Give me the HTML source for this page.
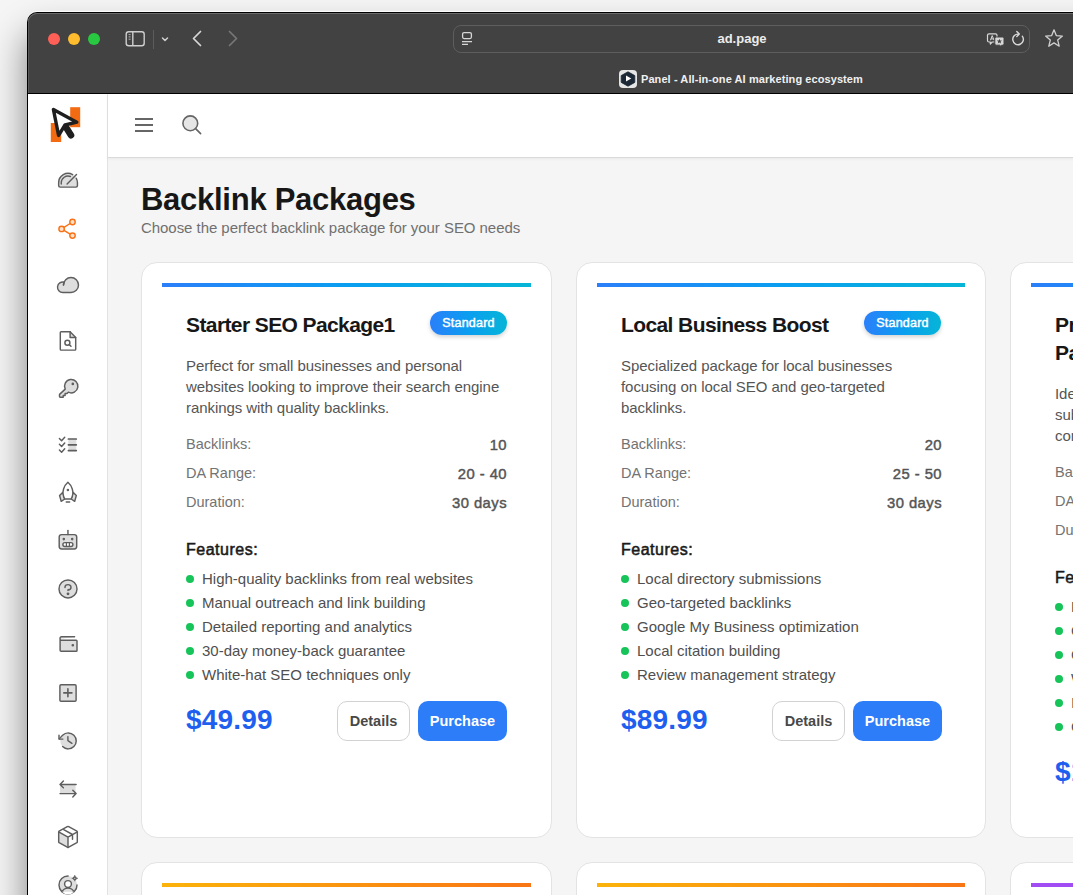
<!DOCTYPE html>
<html><head><meta charset="utf-8">
<style>
*{box-sizing:border-box;margin:0;padding:0}
html,body{width:1073px;height:895px;overflow:hidden}
body{position:relative;font-family:"Liberation Sans",sans-serif;background:#f5f5f5;}
.abs{position:absolute}
#win{position:absolute;left:27px;top:12px;width:1100px;height:900px;border-radius:10px 0 0 0;background:#000;overflow:hidden;box-shadow:0 -1px 0 0 rgba(255,255,255,.8),0 22px 36px rgba(0,0,0,.48)}
#toolbar{position:absolute;left:1px;top:1px;right:0;height:80px;background:#424242;border-radius:9px 0 0 0;box-shadow:inset 0 1px 0 #6a6a6a,inset 1px 0 0 #5a5a5a}
#sidebar{position:absolute;left:1px;top:82px;width:80px;height:820px;background:#fff;border-right:1px solid #e2e2e2}
#header{position:absolute;left:81px;top:82px;width:1020px;height:64px;background:#fff;border-bottom:1px solid #dadada;box-shadow:0 1px 3px rgba(0,0,0,0.05);z-index:2}
#main{position:absolute;left:81px;top:146px;width:1020px;height:760px;background:#f5f5f5}
.card{position:absolute;top:104px;width:411px;height:576px;background:#fff;border:1px solid #e3e3e3;border-radius:16px}

.t{position:absolute;white-space:nowrap}
.bar{position:absolute;left:20px;top:20px;right:20px;height:4px}
.ctitle{position:absolute;left:44px;top:48px;font-size:21px;letter-spacing:-0.6px;font-weight:bold;color:#171717;line-height:28px;white-space:nowrap}
.badge{position:absolute;right:44px;top:48px;width:77px;height:24px;border-radius:12px;background:linear-gradient(90deg,#2b7ff9,#0a9ef0 50%,#06b5d7);color:#fff;font-size:12.5px;font-weight:normal;-webkit-text-stroke:0.45px #fff;letter-spacing:0.2px;line-height:24px;text-align:center;box-shadow:0 2px 4px rgba(0,0,0,0.18)}
.desc{position:absolute;left:44px;top:92px;width:330px;font-size:15px;letter-spacing:-0.06px;line-height:21px;color:#555}
.stat{position:absolute;left:44px;width:321px;height:29px;font-size:14.5px;line-height:29px;color:#737373}
.stat b{position:absolute;right:0;top:1px;color:#555;font-weight:normal;-webkit-text-stroke:0.45px #555;letter-spacing:0.45px;font-size:14.8px}
.feath{position:absolute;left:44px;font-size:16px;font-weight:normal;-webkit-text-stroke:0.55px #1a1a1a;letter-spacing:0.5px;line-height:24px;color:#1a1a1a}
.feat{position:absolute;left:60px;font-size:15px;line-height:24px;color:#4f4f4f;white-space:nowrap}
.dot{position:absolute;left:44px;width:8px;height:8px;border-radius:50%;background:#16c45a}
.price{position:absolute;left:44px;font-size:28px;letter-spacing:0.2px;font-weight:bold;line-height:40px;color:#1f5fef}
.btn1{position:absolute;left:195px;width:73px;height:40px;border:1px solid #d2d2d2;border-radius:10px;font-size:14.5px;font-weight:bold;color:#484848;line-height:38px;text-align:center}
.btn2{position:absolute;left:276px;width:89px;height:40px;border-radius:10px;background:#2e7df8;font-size:14.5px;font-weight:bold;color:#fff;line-height:40px;text-align:center}
</style></head>
<body>
<div id="win">
  <div id="toolbar">
    <div class="abs" style="left:20px;top:20px;width:12px;height:12px;border-radius:50%;background:#fe5f57"></div>
    <div class="abs" style="left:40px;top:20px;width:12px;height:12px;border-radius:50%;background:#febc2e"></div>
    <div class="abs" style="left:60px;top:20px;width:12px;height:12px;border-radius:50%;background:#28c840"></div>
    <svg class="abs" style="left:93px;top:12.5px" width="24" height="24" viewBox="0 0 24 24" fill="none" stroke="#cfcfcf" stroke-width="1.4">
      <rect x="5.2" y="5.7" width="18" height="14" rx="2.5"/><line x1="11.8" y1="5.7" x2="11.8" y2="19.7"/>
      <line x1="7.6" y1="8.6" x2="9.6" y2="8.6" stroke-width="0.8"/><line x1="7.6" y1="10.9" x2="9.6" y2="10.9" stroke-width="0.8"/><line x1="7.6" y1="13.2" x2="9.6" y2="13.2" stroke-width="0.8"/>
    </svg>
    <div class="abs" style="left:125px;top:17px;width:1px;height:19px;background:#5c5c5c"></div>
    <svg class="abs" style="left:130px;top:20px" width="14" height="12" viewBox="0 0 14 12" fill="none" stroke="#d0d0d0" stroke-width="1.5" stroke-linecap="round" stroke-linejoin="round"><path d="M4.5,5 L7,7.5 L9.5,5"/></svg>
    <svg class="abs" style="left:159px;top:14px" width="20" height="22" viewBox="0 0 20 22" fill="none" stroke="#d8d8d8" stroke-width="1.7" stroke-linecap="round" stroke-linejoin="round"><path d="M13.5,4.5 L6.5,11.5 L13.5,18.5"/></svg>
    <svg class="abs" style="left:195px;top:14px" width="20" height="22" viewBox="0 0 20 22" fill="none" stroke="#777" stroke-width="1.7" stroke-linecap="round" stroke-linejoin="round"><path d="M6.5,4.5 L13.5,11.5 L6.5,18.5"/></svg>
    <div class="abs" style="left:425px;top:12px;width:577px;height:28px;border:1px solid #5e5e5e;border-radius:8px"></div>
    <svg class="abs" style="left:432px;top:18px" width="14" height="16" viewBox="0 0 14 16" fill="none" stroke="#d6d6d6" stroke-width="1.3"><rect x="2.6" y="1.6" width="8.8" height="6" rx="1.5"/><line x1="2" y1="10.6" x2="12" y2="10.6"/><line x1="2" y1="13.4" x2="8" y2="13.4"/></svg>
    <div class="abs" style="left:425px;top:12px;width:578px;height:28px;line-height:28px;text-align:center;color:#ececec;font-size:13px;font-weight:bold">ad.page</div>
    <div class="abs" style="left:591px;top:57px;width:18px;height:18px;border-radius:4px;background:#e6e6e6"></div>
    <svg class="abs" style="left:591px;top:57px" width="18" height="18" viewBox="0 0 18 18"><path d="M9,1.8 L15.8,5.6 V12.4 L9,16.2 L2.2,12.4 V5.6 Z" fill="#1c2836" stroke="#1c2836" stroke-width="0.8" stroke-linejoin="round"/><path d="M7,5.6 L12.3,8.6 L7,11.6 Z" fill="#fff"/></svg>
    <svg class="abs" style="left:958px;top:19px" width="20" height="16" viewBox="0 0 20 16" fill="none" stroke="#d8d8d8" stroke-width="1.2" stroke-linejoin="round">
      <path d="M3,1.8 H9.5 Q11,1.8 11,3.3 V8.5 Q11,10 9.5,10 H6.2 L4.3,12 V10 H3 Q1.5,10 1.5,8.5 V3.3 Q1.5,1.8 3,1.8 Z"/>
      <path d="M4.4,8.3 L6.2,3.6 L8,8.3 M5,6.9 H7.4" stroke-width="1"/>
      <path d="M10.3,5 H16.5 Q18,5 18,6.5 V11.7 Q18,13.2 16.5,13.2 H15.6 V15 L13.7,13.2 H10.3 Q8.8,13.2 8.8,11.7 V6.5 Q8.8,5 10.3,5 Z" fill="#d8d8d8" stroke="#424242" stroke-width="1"/>
      <path d="M13.4,6.8 L14.1,8.6 L16,8.6 L14.5,9.7 L15.1,11.5 L13.4,10.4 L11.7,11.5 L12.3,9.7 L10.8,8.6 L12.7,8.6 Z" fill="#424242" stroke="none"/>
    </svg>
    <svg class="abs" style="left:982px;top:17px" width="16" height="17" viewBox="0 0 16 17" fill="none" stroke="#d8d8d8" stroke-width="1.4" stroke-linecap="round" stroke-linejoin="round"><path d="M12.3,6.2 A5.3,5.3 0 1 1 8.5,4.1"/><path d="M6.8,1.6 L9.3,4.1 L6.8,6.5"/></svg>
    <svg class="abs" style="left:1015.5px;top:15px" width="20" height="21" viewBox="0 0 20 21" fill="none" stroke="#d0d0d0" stroke-width="1.3" stroke-linejoin="round"><path d="M10,1.8 L12.3,7.6 L18.4,8.1 L13.7,12.1 L15.2,18.2 L10,14.9 L4.8,18.2 L6.3,12.1 L1.6,8.1 L7.7,7.6 Z"/></svg>
    <div class="abs" id="tabtitle" style="left:613px;top:58px;height:16px;line-height:16px;color:#f0f0f0;font-size:11px;letter-spacing:0.08px;font-weight:bold;white-space:nowrap">Panel - All-in-one AI marketing ecosystem</div>
  </div>
  <div id="sidebar">
    <svg class="abs" style="left:20px;top:10px" width="40" height="40" viewBox="0 0 40 40">
      <rect x="22.2" y="3.2" width="10" height="20" fill="#f26b12"/><rect x="2.8" y="19" width="10.4" height="19" fill="#f26b12"/>
      <path d="M17.2,22 L23,31.2" stroke="#1f1f1f" stroke-width="6.6" stroke-linecap="round"/>
      <path d="M5.4,5.4 L28.8,18.2 L17,21 L10.6,31.4 Z" fill="#fff" stroke="#1f1f1f" stroke-width="3.4" stroke-linejoin="round"/>
    </svg>
<svg class="abs" style="left:28px;top:74px" width="24" height="24" viewBox="0 0 24 24" fill="none" stroke="#5e5e5e" stroke-width="1.45" stroke-linecap="round" stroke-linejoin="round"><path d="M2.65,14.85 A9.4,9.4 0 0 1 21.45,14.85 V17.6 Q21.45,19.1 19.95,19.1 H4.15 Q2.65,19.1 2.65,17.6 Z" fill="#dedede" stroke="none"/><path d="M20.24,10.24 A9.4,9.4 0 0 1 21.45,14.85 V17.6 Q21.45,19.1 19.95,19.1 H4.15 Q2.65,19.1 2.65,17.6 V14.85 A9.4,9.4 0 0 1 16.65,6.65"/><path d="M5.25,16.1 V14.85 A6.8,6.8 0 0 1 14.44,8.49"/><path d="M11.1,16.1 L20.5,6.6"/></svg>
<svg class="abs" style="left:28px;top:123px" width="24" height="24" viewBox="0 0 24 24" fill="none" stroke="#f97316" stroke-width="1.45" stroke-linecap="round" stroke-linejoin="round"><line x1="5.6" y1="11.9" x2="16.5" y2="5"/><line x1="5.6" y1="11.9" x2="16.5" y2="18.6"/><circle cx="16.5" cy="5" r="2.7" fill="#fde3cf"/><circle cx="5.6" cy="11.9" r="2.7" fill="#fde3cf"/><circle cx="16.5" cy="18.6" r="2.7" fill="#fde3cf"/></svg>
<svg class="abs" style="left:28px;top:179px" width="24" height="24" viewBox="0 0 24 24" fill="none" stroke="#5e5e5e" stroke-width="1.45" stroke-linecap="round" stroke-linejoin="round"><path d="M7.5,12 A7.5,7.5 0 1 1 15,19.5 H6.75 A5.25,5.25 0 1 1 8.06,9.16" fill="#dedede"/><path d="M7.5,12 A7.5,7.5 0 0 1 8.1,9.1"/></svg>
<svg class="abs" style="left:28px;top:235px" width="24" height="24" viewBox="0 0 24 24" fill="none" stroke="#5e5e5e" stroke-width="1.45" stroke-linecap="round" stroke-linejoin="round"><path d="M14.1,2.8 V8.4 H19.7 Z" fill="#dedede" stroke="none"/><path d="M18.9,21.1 H5.1 A0.8,0.8 0 0 1 4.3,20.3 V3.6 A0.8,0.8 0 0 1 5.1,2.8 H14.1 L19.7,8.4 V20.3 A0.8,0.8 0 0 1 18.9,21.1 Z"/><path d="M14.1,2.8 V8.4 H19.7"/><circle cx="11.4" cy="13.8" r="2.5"/><path d="M13.2,15.6 L15,17.3"/></svg>
<svg class="abs" style="left:28px;top:283px" width="24" height="24" viewBox="0 0 24 24" fill="none" stroke="#5e5e5e" stroke-width="1.45" stroke-linecap="round" stroke-linejoin="round"><path d="M9.2,12.1 A6.7,6.7 0 1 1 12.3,15.2 L11,16.5 H9.1 V18.4 H7.2 V20.3 H4.2 Q3.5,20.3 3.5,19.6 V17.7 Q3.5,17.4 3.8,17.1 Z" fill="#dedede"/><circle cx="16.8" cy="6.9" r="0.6" fill="#5e5e5e"/></svg>
<svg class="abs" style="left:28px;top:339px" width="24" height="24" viewBox="0 0 24 24" fill="none" stroke="#5e5e5e" stroke-width="1.45" stroke-linecap="round" stroke-linejoin="round"><rect x="12.4" y="6" width="7.9" height="11.6" fill="#dedede" stroke="none"/><path d="M12.4,6 H20.3 M12.4,11.8 H20.3 M12.4,17.6 H20.3" stroke-width="1.7"/><path d="M3.4,5.5 L5.6,7.7 L8.7,4.2 M3.4,11.3 L5.6,13.5 L8.7,10 M3.4,17.1 L5.6,19.3 L8.7,15.8"/></svg>
<svg class="abs" style="left:28px;top:386px" width="24" height="24" viewBox="0 0 24 24" fill="none" stroke="#5e5e5e" stroke-width="1.45" stroke-linecap="round" stroke-linejoin="round"><path d="M6.9,12.3 L3.6,15.6 L5.2,21.3 L8.7,19 Z M17,12.3 L20.3,15.6 L18.7,21.3 L15.2,19 Z" fill="#dedede"/><path d="M8.7,19 C4.8,12 8.5,5 11.9,2.2 C15.3,5 19.1,12 15.2,19 Z" fill="#fff"/><circle cx="11.9" cy="10" r="0.55" fill="#5e5e5e"/><path d="M10.2,22 H13.7" stroke-width="1.3"/></svg>
<svg class="abs" style="left:28px;top:434px" width="24" height="24" viewBox="0 0 24 24" fill="none" stroke="#5e5e5e" stroke-width="1.45" stroke-linecap="round" stroke-linejoin="round"><rect x="3.2" y="6.6" width="17.5" height="14.3" rx="2.4" fill="#dedede"/><path d="M11.95,6.6 V2.4"/><circle cx="7.8" cy="11.1" r="0.55" fill="#5e5e5e"/><circle cx="16.2" cy="11.1" r="0.55" fill="#5e5e5e"/><rect x="6.9" y="14.6" width="10" height="3.9" rx="1.95" fill="#fff"/><path d="M10.4,14.6 V18.5 M13.4,14.6 V18.5" stroke-width="1.2"/></svg>
<svg class="abs" style="left:28px;top:483px" width="24" height="24" viewBox="0 0 24 24" fill="none" stroke="#5e5e5e" stroke-width="1.45" stroke-linecap="round" stroke-linejoin="round"><circle cx="12" cy="11.9" r="9" fill="#dedede"/><path d="M12,13.5 V12.75 C13.66,12.75 15,11.57 15,10.125 S13.66,7.6 12,7.6 9,8.68 9,10.125 V10.5"/><circle cx="12" cy="16.8" r="0.7" fill="#5e5e5e"/></svg>
<svg class="abs" style="left:28px;top:538px" width="24" height="24" viewBox="0 0 24 24" fill="none" stroke="#5e5e5e" stroke-width="1.45" stroke-linecap="round" stroke-linejoin="round"><path d="M4.1,7 V18.2 A1,1 0 0 0 5.1,19.2 H20.2 A0.8,0.8 0 0 0 21,18.4 V9.1 A0.8,0.8 0 0 0 20.2,8.3 H5.5 A1.4,1.4 0 0 1 4.1,6.9 A1.6,1.6 0 0 1 5.7,4.7 H18.6" fill="#dedede"/><circle cx="16.8" cy="13.2" r="0.6" fill="#5e5e5e"/></svg>
<svg class="abs" style="left:28px;top:587px" width="24" height="24" viewBox="0 0 24 24" fill="none" stroke="#5e5e5e" stroke-width="1.45" stroke-linecap="round" stroke-linejoin="round"><rect x="3.9" y="3.8" width="16.2" height="16.5" rx="1.1" fill="#dedede"/><path d="M7.8,11.9 H15.9 M11.9,7.7 V15.8" stroke-width="1.6"/></svg>
<svg class="abs" style="left:28px;top:635px" width="24" height="24" viewBox="0 0 24 24" fill="none" stroke="#5e5e5e" stroke-width="1.45" stroke-linecap="round" stroke-linejoin="round"><circle cx="12.3" cy="11.9" r="8" fill="#dedede" stroke="none"/><path d="M6.6,17.6 A8,8 0 1 0 6.6,6.2 C5.5,7.3 4.4,8.5 3.3,9.9"/><path d="M6.9,10.1 H3 V6.2"/><path d="M11.9,7.6 V11.6 L15.9,14.3"/></svg>
<svg class="abs" style="left:28px;top:683px" width="24" height="24" viewBox="0 0 24 24" fill="none" stroke="#5e5e5e" stroke-width="1.45" stroke-linecap="round" stroke-linejoin="round"><rect x="4" y="7.4" width="15.6" height="9.2" fill="#dedede" stroke="none"/><path d="M7.4,4 L4,7.4 L7.4,10.7 M4,7.4 H20.1 M16.8,13.2 L20.1,16.6 L16.8,20 M20.1,16.6 H4"/></svg>
<svg class="abs" style="left:28px;top:731px" width="24" height="24" viewBox="0 0 24 24" fill="none" stroke="#5e5e5e" stroke-width="1.45" stroke-linecap="round" stroke-linejoin="round"><path d="M12,12.1 V22.3 L3.1,17.3 Q2.7,17 2.7,16.6 V7.3 Z" fill="#dedede" stroke="none"/><path d="M20.9,6.2 L12.7,1.7 Q12,1.3 11.3,1.7 L3.1,6.2 Q2.7,6.5 2.7,7.1 V16.9 Q2.7,17.4 3.1,17.7 L11.3,22.2 Q12,22.6 12.7,22.2 L20.9,17.7 Q21.3,17.4 21.3,16.9 V7.1 Q21.3,6.5 20.9,6.2 Z"/><path d="M3.1,7.2 L12,12.1 L20.9,7.2 M12,12.1 V22.4 M7.7,4.7 L16.5,9.5 V14.2"/></svg>
<svg class="abs" style="left:28px;top:779px" width="24" height="24" viewBox="0 0 24 24" fill="none" stroke="#5e5e5e" stroke-width="1.45" stroke-linecap="round" stroke-linejoin="round"><circle cx="12" cy="12" r="9" fill="#dedede" stroke="none"/><path d="M21,11.9 A9,9 0 1 1 12.1,3"/><circle cx="12" cy="11" r="3.4" fill="#fff"/><path d="M6,18.7 A6.8,6.8 0 0 1 18,18.7"/><path d="M6,18.7 A8,8 0 0 0 18,18.7" fill="#fff" stroke="none"/><circle cx="18.8" cy="5.2" r="1.3"/><path d="M18.8,2.6 V3.5 M18.8,6.9 V7.8 M16.2,5.2 H17.1 M20.5,5.2 H21.4" stroke-width="1.1"/></svg>
  </div>
  <div id="header">
    <svg class="abs" style="left:24px;top:18px" width="24" height="24" viewBox="0 0 24 24" stroke="#666" stroke-width="2"><line x1="3" y1="7" x2="21" y2="7"/><line x1="3" y1="13" x2="21" y2="13"/><line x1="3" y1="19" x2="21" y2="19"/></svg>
    <svg class="abs" style="left:70px;top:17px" width="24" height="24" viewBox="0 0 24 24" fill="none" stroke="#666" stroke-width="1.6" stroke-linecap="round"><circle cx="12.3" cy="12.3" r="7.4" fill="#e6e6e6"/><line x1="17.6" y1="17.6" x2="22.6" y2="22.6"/></svg>
  </div>
  <div id="main">
    <div class="t" style="left:33px;top:22px;font-size:31px;letter-spacing:-0.27px;font-weight:bold;color:#171717;line-height:40px">Backlink Packages</div>
    <div class="t" style="left:33px;top:60px;font-size:15px;letter-spacing:-0.05px;color:#707070;line-height:20px">Choose the perfect backlink package for your SEO needs</div>
<div class="card" style="left:33px">
<div class="bar" style="background:linear-gradient(90deg,#2b7ff9,#0a9ef0 50%,#06b5d7)"></div>
<div class="ctitle">Starter SEO Package1</div>
<div class="badge">Standard</div>
<div class="desc" style="top:92px">Perfect for small businesses and personal<br>websites looking to improve their search engine<br>rankings with quality backlinks.</div>
<div class="stat" style="top:167px">Backlinks:<b>10</b></div>
<div class="stat" style="top:196px">DA Range:<b>20 - 40</b></div>
<div class="stat" style="top:225px">Duration:<b>30 days</b></div>
<div class="feath" style="top:275px">Features:</div>
<div class="dot" style="top:312px"></div><div class="feat" style="top:304px">High-quality backlinks from real websites</div>
<div class="dot" style="top:336px"></div><div class="feat" style="top:328px">Manual outreach and link building</div>
<div class="dot" style="top:360px"></div><div class="feat" style="top:352px">Detailed reporting and analytics</div>
<div class="dot" style="top:384px"></div><div class="feat" style="top:376px">30-day money-back guarantee</div>
<div class="dot" style="top:408px"></div><div class="feat" style="top:400px">White-hat SEO techniques only</div>
<div class="price" style="top:437px">$49.99</div>
<div class="btn1" style="top:438px">Details</div><div class="btn2" style="top:438px">Purchase</div>
</div>
<div class="card" style="left:468px;width:410px">
<div class="bar" style="background:linear-gradient(90deg,#2b7ff9,#0a9ef0 50%,#06b5d7)"></div>
<div class="ctitle">Local Business Boost</div>
<div class="badge">Standard</div>
<div class="desc" style="top:92px">Specialized package for local businesses<br>focusing on local SEO and geo-targeted<br>backlinks.</div>
<div class="stat" style="top:167px">Backlinks:<b>20</b></div>
<div class="stat" style="top:196px">DA Range:<b>25 - 50</b></div>
<div class="stat" style="top:225px">Duration:<b>30 days</b></div>
<div class="feath" style="top:275px">Features:</div>
<div class="dot" style="top:312px"></div><div class="feat" style="top:304px">Local directory submissions</div>
<div class="dot" style="top:336px"></div><div class="feat" style="top:328px">Geo-targeted backlinks</div>
<div class="dot" style="top:360px"></div><div class="feat" style="top:352px">Google My Business optimization</div>
<div class="dot" style="top:384px"></div><div class="feat" style="top:376px">Local citation building</div>
<div class="dot" style="top:408px"></div><div class="feat" style="top:400px">Review management strategy</div>
<div class="price" style="top:437px">$89.99</div>
<div class="btn1" style="top:438px">Details</div><div class="btn2" style="top:438px">Purchase</div>
</div>
<div class="card" style="left:902px;width:410px">
<div class="bar" style="background:linear-gradient(90deg,#2b7ff9,#0a9ef0 50%,#06b5d7)"></div>
<div class="ctitle">Premium Authority<br>Package</div>
<div class="badge">Standard</div>
<div class="desc" style="top:120px">Ideal for businesses seeking<br>substantial authority boosts and<br>competitive rankings.</div>
<div class="stat" style="top:195px">Backlinks:<b>50</b></div>
<div class="stat" style="top:224px">DA Range:<b>40 - 70</b></div>
<div class="stat" style="top:253px">Duration:<b>60 days</b></div>
<div class="feath" style="top:303px">Features:</div>
<div class="dot" style="top:340px"></div><div class="feat" style="top:332px">Premium guest posts</div>
<div class="dot" style="top:364px"></div><div class="feat" style="top:356px">Contextual backlinks</div>
<div class="dot" style="top:388px"></div><div class="feat" style="top:380px">Content creation included</div>
<div class="dot" style="top:412px"></div><div class="feat" style="top:404px">White-hat techniques</div>
<div class="dot" style="top:436px"></div><div class="feat" style="top:428px">In-depth reporting</div>
<div class="dot" style="top:460px"></div><div class="feat" style="top:452px">Competitor analysis</div>
<div class="price" style="top:489px">$149.99</div>
<div class="btn1" style="top:490px">Details</div><div class="btn2" style="top:490px">Purchase</div>
</div>
<div class="card" style="left:33px;top:704px"><div class="bar" style="background:linear-gradient(90deg,#fbb30a,#f97516)"></div></div>
<div class="card" style="left:468px;top:704px;width:410px"><div class="bar" style="background:linear-gradient(90deg,#fbb30a,#f97516)"></div></div>
<div class="card" style="left:902px;top:704px;width:410px"><div class="bar" style="background:linear-gradient(90deg,#a24df4,#9a45f2)"></div></div>
  </div>
</div>
</body></html>
